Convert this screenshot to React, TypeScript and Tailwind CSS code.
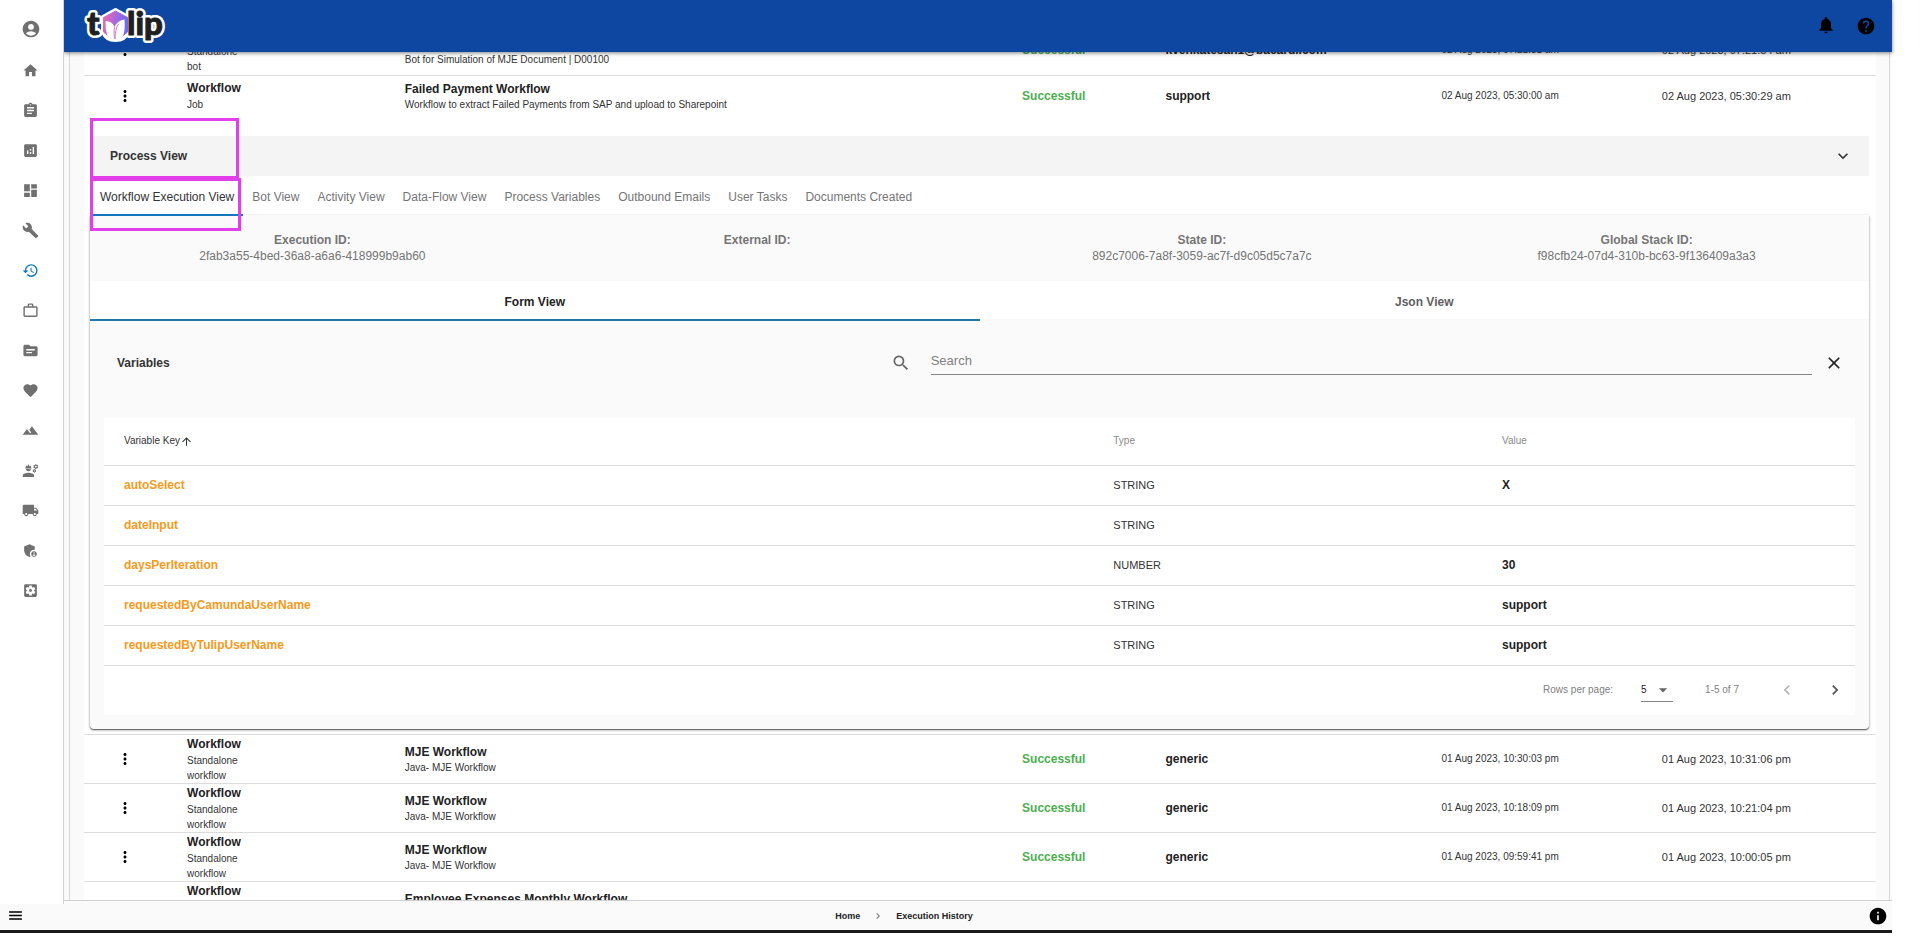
import React from "react";
import {
  MdAccountCircle, MdHome, MdAssignment, MdAnalytics, MdDashboard, MdBuild, MdHistory, MdWorkOutline,
  MdSource, MdFavorite, MdFilterHdr, MdEngineering, MdLocalShipping, MdAdminPanelSettings,
  MdSettingsApplications, MdNotifications, MdHelp, MdInfo, MdMenu, MdMoreVert, MdExpandMore, MdSearch,
  MdClose, MdArrowUpward, MdArrowDropDown, MdChevronLeft, MdChevronRight,
} from "react-icons/md";

type Execution = {
  kind: string;
  sub: string[];
  name: string;
  desc: string;
  user: string;
  start: string;
  end: string;
  open?: boolean;
};

const executions: Execution[] = [
  { kind: "Bot", sub: ["Standalone", "bot"], name: "MJE Simulation", desc: "Bot for Simulation of MJE Document | D00100", user: "kvenkatesan1@bacardi.com", start: "02 Aug 2023, 07:21:31 am", end: "02 Aug 2023, 07:21:54 am" },
  { kind: "Workflow", sub: ["Job"], name: "Failed Payment Workflow", desc: "Workflow to extract Failed Payments from SAP and upload to Sharepoint", user: "support", start: "02 Aug 2023, 05:30:00 am", end: "02 Aug 2023, 05:30:29 am", open: true },
  { kind: "Workflow", sub: ["Standalone", "workflow"], name: "MJE Workflow", desc: "Java- MJE Workflow", user: "generic", start: "01 Aug 2023, 10:30:03 pm", end: "01 Aug 2023, 10:31:06 pm" },
  { kind: "Workflow", sub: ["Standalone", "workflow"], name: "MJE Workflow", desc: "Java- MJE Workflow", user: "generic", start: "01 Aug 2023, 10:18:09 pm", end: "01 Aug 2023, 10:21:04 pm" },
  { kind: "Workflow", sub: ["Standalone", "workflow"], name: "MJE Workflow", desc: "Java- MJE Workflow", user: "generic", start: "01 Aug 2023, 09:59:41 pm", end: "01 Aug 2023, 10:00:05 pm" },
  { kind: "Workflow", sub: ["Standalone", "workflow"], name: "Employee Expenses Monthly Workflow", desc: "Monthly expenses", user: "shwetalik@bacardi.com", start: "01 Aug 2023, 09:30:00 pm", end: "01 Aug 2023, 09:31:12 pm" },
];

const variables = [
  { key: "autoSelect", type: "STRING", value: "X" },
  { key: "dateInput", type: "STRING", value: "" },
  { key: "daysPerIteration", type: "NUMBER", value: "30" },
  { key: "requestedByCamundaUserName", type: "STRING", value: "support" },
  { key: "requestedByTulipUserName", type: "STRING", value: "support" },
];

const ids = [
  { label: "Execution ID:", value: "2fab3a55-4bed-36a8-a6a6-418999b9ab60" },
  { label: "External ID:", value: "" },
  { label: "State ID:", value: "892c7006-7a8f-3059-ac7f-d9c05d5c7a7c" },
  { label: "Global Stack ID:", value: "f98cfb24-07d4-310b-bc63-9f136409a3a3" },
];

const views = ["Workflow Execution View", "Bot View", "Activity View", "Data-Flow View", "Process Variables", "Outbound Emails", "User Tasks", "Documents Created"];

const navItems = [
  { label: "Home", Icon: MdHome },
  { label: "Tasks", Icon: MdAssignment },
  { label: "Analytics", Icon: MdAnalytics },
  { label: "Dashboard", Icon: MdDashboard },
  { label: "Tools", Icon: MdBuild },
  { label: "Execution History", Icon: MdHistory, active: true },
  { label: "Work", Icon: MdWorkOutline },
  { label: "Sources", Icon: MdSource },
  { label: "Favorites", Icon: MdFavorite },
  { label: "Landscape", Icon: MdFilterHdr },
  { label: "Engineering", Icon: MdEngineering },
  { label: "Shipping", Icon: MdLocalShipping },
  { label: "Administration", Icon: MdAdminPanelSettings },
  { label: "Settings", Icon: MdSettingsApplications },
];

function Logo() {
  return (
    <svg viewBox="0 0 84 40" className="h-10 w-[84px] overflow-visible" role="img" aria-label="tulip">
      <defs>
        <linearGradient id="tulipFace" x1="0" y1="0" x2="1" y2="0.3">
          <stop offset="0" stopColor="#ee6fa8" />
          <stop offset="0.5" stopColor="#b266d8" />
          <stop offset="1" stopColor="#6d6cf0" />
        </linearGradient>
      </defs>
      <g fontFamily="Lato, 'Open Sans', sans-serif" fontWeight="900" fontSize="33" strokeLinejoin="round">
        <g fill="#fff" stroke="#fff" strokeWidth="6">
          <text x="3" y="29">t</text>
          <text x="43" y="29">lip</text>
        </g>
        <path d="M31.500 4 44 11V25.500Q41 34 31.500 34Q22 34 19 25.500V11Z" fill="#fff" stroke="#fff" strokeWidth="4" />
        <g fill="#1f1f1f" stroke="#1f1f1f" strokeWidth="1">
          <text x="3" y="29">t</text>
          <text x="43" y="29">lip</text>
        </g>
      </g>
      <path d="M31.500 5 43.500 11.500V26L37.500 31H25.500L19.500 26V11.500Z" fill="url(#tulipFace)" stroke="url(#tulipFace)" strokeWidth="1" strokeLinejoin="round" />
      <path d="M21.500 15Q28.500 15 30.500 21Q33.500 14 40.500 13.500Q41.500 25 38.500 31Q35.500 35 31.500 35Q26.500 35 23.500 30Q21 23 21.500 15Z" fill="#fff" />
      <path d="M30.500 21Q29 27 31 33M34.500 18Q31 23 31 33" fill="none" stroke="#d779c4" strokeWidth="1" />
    </svg>
  );
}

function TopBar() {
  return (
    <header className="relative z-10 flex h-[52px] shrink-0 items-center justify-between bg-[#0d47a1] pr-4 pl-5 shadow-[0_1px_4px_rgba(0,0,0,0.5)]">
      <Logo />
      <div className="flex items-center gap-5 text-black">
        <button aria-label="Notifications" className="-mt-0.5"><MdNotifications size={20} /></button>
        <button aria-label="Help"><MdHelp size={20} /></button>
      </div>
    </header>
  );
}

function SideNav() {
  return (
    <nav className="relative z-20 -mb-[3px] w-16 shrink-0 border-r border-[#d4d4d4] bg-white text-[#707070]">
      <button aria-label="Account" className="flex h-[50px] w-[61px] items-center justify-center pt-[7px]">
        <MdAccountCircle size={20} />
      </button>
      <ul>
        {navItems.map(({ label, Icon, active }) => (
          <li key={label}>
            <a href="#" aria-label={label} className={active ? "flex h-10 w-[61px] items-center justify-center text-[#0b76bb]" : "flex h-10 w-[61px] items-center justify-center"}>
              <Icon size={17} />
            </a>
          </li>
        ))}
      </ul>
    </nav>
  );
}

function VariablesPanel() {
  return (
    <section className="pb-3.5">
      <div className="mb-[13px] flex h-[84px] items-center justify-between pr-[25px] pl-[27px]">
        <h3 className="font-bold text-[#333]">Variables</h3>
        <div className="flex w-[55.2%] items-center">
          <label htmlFor="variable-search" aria-label="Search variables" className="text-[#666]"><MdSearch size={20} /></label>
          <input id="variable-search" type="text" placeholder="Search" className="ml-5 h-6 flex-1 border-b border-[#858585] bg-transparent pb-1 text-[13px] outline-none placeholder:text-[#808080]" />
          <button aria-label="Clear search" className="ml-3 text-[#222]"><MdClose size={20} /></button>
        </div>
      </div>
      <div className="mx-3.5 bg-white">
        <table className="w-full table-fixed text-left">
          <colgroup>
            <col className="w-[56.5%]" />
            <col className="w-[22.2%]" />
            <col />
          </colgroup>
          <thead>
            <tr className="h-[47px] border-b border-[#dcdcdc] text-[10px] text-[#8a8a8a]">
              <th className="pl-5 font-normal text-[#333]">
                <button className="flex items-center">Variable Key<MdArrowUpward size={13} /></button>
              </th>
              <th className="pl-5 font-normal">Type</th>
              <th className="pl-5 font-normal">Value</th>
            </tr>
          </thead>
          <tbody>
            {variables.map((v) => (
              <tr key={v.key} className="h-10 border-b border-[#dcdcdc]">
                <td className="pl-5 font-bold text-[#f59a1c]">{v.key}</td>
                <td className="pl-5 text-[11px] text-[#333]">{v.type}</td>
                <td className="pl-5 font-bold text-[#222]">{v.value}</td>
              </tr>
            ))}
          </tbody>
        </table>
        <div className="flex h-[49px] items-center justify-end pr-2.5 text-[10px] text-[#808080]">
          <label htmlFor="rows-per-page">Rows per page:</label>
          <div className="relative ml-7">
            <select id="rows-per-page" defaultValue="5" className="h-6 w-8 appearance-none border-b border-[#858585] bg-transparent text-[#222] outline-none">
              <option>5</option>
              <option>10</option>
            </select>
            <MdArrowDropDown size={20} className="pointer-events-none absolute top-0.5 right-0 text-[#666]" />
          </div>
          <span className="mx-8">1-5 of 7</span>
          <button aria-label="Previous page" className="ml-1.5 text-[#b5b5b5]" disabled><MdChevronLeft size={20} /></button>
          <button aria-label="Next page" className="ml-7 text-[#555]"><MdChevronRight size={20} /></button>
        </div>
      </div>
    </section>
  );
}

function ProcessView() {
  return (
    <div className="relative pt-5 pr-[7px] pb-[5px] pl-1.5">
      <button className="flex h-10 w-full items-center justify-between bg-[#f4f4f4] pr-4 pl-5 font-bold text-[#333]">
        Process View
        <MdExpandMore size={20} />
      </button>
      <div role="tablist" className="flex h-10 pl-px">
        {views.map((view, i) => (
          <button key={view} role="tab" aria-selected={i === 0} className={i === 0 ? "border-b-2 border-[#1277bd] px-[9px] pt-1 text-[#333]" : "border-b-2 border-transparent px-[9px] pt-1 text-[#757575]"}>
            {view}
          </button>
        ))}
      </div>
      <div className="-mt-px rounded-b bg-[#fafafa] shadow-[0_1px_1px_rgba(0,0,0,0.5),0_1px_3px_rgba(0,0,0,0.35)]">
        <dl className="grid h-[66px] grid-cols-4 pt-[17px] text-center leading-4 text-[#757575]">
          {ids.map((id) => (
            <div key={id.label}>
              <dt className="font-bold">{id.label}</dt>
              <dd>{id.value}</dd>
            </div>
          ))}
        </dl>
        <div role="tablist" className="grid h-10 grid-cols-2 bg-white font-bold">
          <button role="tab" aria-selected className="border-b-2 border-[#1f78aa] pt-1 text-[#222]">Form View</button>
          <button role="tab" aria-selected={false} className="border-b-2 border-[#fafafa] pt-1 text-[#606060]">Json View</button>
        </div>
        <VariablesPanel />
      </div>
      <div className="pointer-events-none absolute top-0.5 left-1.5 h-[61px] w-[149px] border-3 border-[#e23fea]" />
      <div className="pointer-events-none absolute top-[62px] left-1.5 h-[53px] w-[151px] border-3 border-[#e23fea]" />
    </div>
  );
}

function ExecutionRow({ row }: { row: Execution }) {
  return (
    <>
      <tr className={row.open ? "h-[41px]" : "h-[49px] border-b border-[#dcdcdc]"}>
        <td className="pl-8">
          <button aria-label="Row actions" className="block text-black"><MdMoreVert size={18} /></button>
        </td>
        <td>
          <div className="leading-[18px] font-bold">{row.kind}</div>
          {row.sub.map((line) => (
            <div key={line} className="text-[10px] leading-[15px] text-[#333]">{line}</div>
          ))}
        </td>
        <td className="pt-[3px]">
          <div className="leading-[15px] font-bold">{row.name}</div>
          <div className="text-[10px] leading-[15px] text-[#333]">{row.desc}</div>
        </td>
        <td className="font-bold text-[#4caf50]">Successful</td>
        <td className="font-bold">{row.user}</td>
        <td className="text-[10px] text-[#333]">{row.start}</td>
        <td className="text-[11px] text-[#333]">{row.end}</td>
      </tr>
      {row.open && (
        <tr className="border-b border-[#dcdcdc]">
          <td colSpan={7}><ProcessView /></td>
        </tr>
      )}
    </>
  );
}

export default function App() {
  return (
    <div className="h-screen overflow-hidden bg-white pr-7 pb-1 font-['Liberation_Sans',Arial,sans-serif] text-[12px] leading-4 text-[#222]">
      <div className="flex h-full flex-col border-b-3 border-[#1a1a1a]">
        <div className="flex min-h-0 flex-1">
          <SideNav />
          <div className="flex min-w-0 flex-1 flex-col border-b border-[#cfcfcf] bg-[#fafafa]">
            <TopBar />
            <main className="mr-0.5 ml-[5px] min-h-0 flex-1 overflow-hidden border-x border-[#d8d8d8] pr-[13px] pl-3.5">
              <table className="-mt-[26px] w-full table-fixed bg-white">
                <colgroup>
                  <col className="w-[5.75%]" />
                  <col className="w-[12.15%]" />
                  <col className="w-[34.45%]" />
                  <col className="w-[8%]" />
                  <col className="w-[15.4%]" />
                  <col className="w-[12.3%]" />
                  <col />
                </colgroup>
                <tbody>
                  {executions.map((row) => (
                    <ExecutionRow key={row.start} row={row} />
                  ))}
                </tbody>
              </table>
            </main>
          </div>
        </div>
        <footer className="relative z-10 flex h-[29px] shrink-0 items-center bg-[#fafafa] pr-1 pl-[7px]">
          <button aria-label="Menu" className="text-black"><MdMenu size={17} /></button>
          <nav aria-label="Breadcrumb" className="flex flex-1 items-center justify-center gap-3 pr-[84px] text-[9px] font-bold">
            <a href="#">Home</a>
            <MdChevronRight size={12} className="text-[#777]" />
            <a href="#">Execution History</a>
          </nav>
          <button aria-label="Information" className="text-black"><MdInfo size={20} /></button>
        </footer>
      </div>
    </div>
  );
}
